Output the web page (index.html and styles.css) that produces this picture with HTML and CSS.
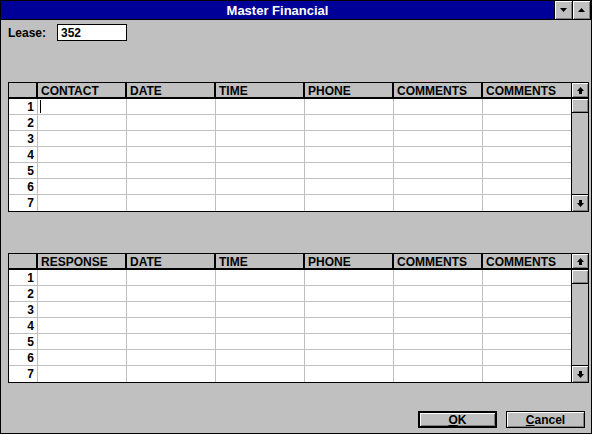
FILE: index.html
```html
<!DOCTYPE html>
<html lang="en">
<head>
  <meta charset="UTF-8" />
  <title>Master Financial</title>
  <link rel="stylesheet" href="styles.css">
</head>
<body>
  <div class="window">
    <div class="titlebar">
      <div class="title">Master Financial</div>
      <div class="tbtn"><svg width="7" height="4" viewBox="0 0 7 4"><path d="M0 0h7L3.5 4z" fill="#000"/></svg></div>
      <div class="tbtn last"><svg width="7" height="4" viewBox="0 0 7 4"><path d="M0 4h7L3.5 0z" fill="#000"/></svg></div>
    </div>

    <div class="lease">
      <label>Lease:</label>
      <div class="field">352</div>
    </div>

    <div class="grid first">
      <div class="sheet">
        <div class="row head">
          <div class="rh"></div>
          <div class="c">CONTACT</div>
          <div class="c">DATE</div>
          <div class="c">TIME</div>
          <div class="c">PHONE</div>
          <div class="c">COMMENTS</div>
          <div class="c">COMMENTS</div>
        </div>
        <div class="row"><div class="rh">1</div><div class="c"><span class="caret"></span></div><div class="c"></div><div class="c"></div><div class="c"></div><div class="c"></div><div class="c"></div></div>
        <div class="row"><div class="rh">2</div><div class="c"></div><div class="c"></div><div class="c"></div><div class="c"></div><div class="c"></div><div class="c"></div></div>
        <div class="row"><div class="rh">3</div><div class="c"></div><div class="c"></div><div class="c"></div><div class="c"></div><div class="c"></div><div class="c"></div></div>
        <div class="row"><div class="rh">4</div><div class="c"></div><div class="c"></div><div class="c"></div><div class="c"></div><div class="c"></div><div class="c"></div></div>
        <div class="row"><div class="rh">5</div><div class="c"></div><div class="c"></div><div class="c"></div><div class="c"></div><div class="c"></div><div class="c"></div></div>
        <div class="row"><div class="rh">6</div><div class="c"></div><div class="c"></div><div class="c"></div><div class="c"></div><div class="c"></div><div class="c"></div></div>
        <div class="row"><div class="rh">7</div><div class="c"></div><div class="c"></div><div class="c"></div><div class="c"></div><div class="c"></div><div class="c"></div></div>
      </div>
      <div class="vscroll">
        <div class="sbtn up"><svg width="7" height="7" viewBox="0 0 7 7"><path d="M3.5 0L7 4H5v3H2V4H0z" fill="#000"/></svg></div>
        <div class="thumb"></div>
        <div class="track"></div>
        <div class="sbtn down"><svg width="7" height="7" viewBox="0 0 7 7"><path d="M2 0h3v3h2L3.5 7 0 3h2z" fill="#000"/></svg></div>
      </div>
    </div>

    <div class="grid second">
      <div class="sheet">
        <div class="row head">
          <div class="rh"></div>
          <div class="c">RESPONSE</div>
          <div class="c">DATE</div>
          <div class="c">TIME</div>
          <div class="c">PHONE</div>
          <div class="c">COMMENTS</div>
          <div class="c">COMMENTS</div>
        </div>
        <div class="row"><div class="rh">1</div><div class="c"></div><div class="c"></div><div class="c"></div><div class="c"></div><div class="c"></div><div class="c"></div></div>
        <div class="row"><div class="rh">2</div><div class="c"></div><div class="c"></div><div class="c"></div><div class="c"></div><div class="c"></div><div class="c"></div></div>
        <div class="row"><div class="rh">3</div><div class="c"></div><div class="c"></div><div class="c"></div><div class="c"></div><div class="c"></div><div class="c"></div></div>
        <div class="row"><div class="rh">4</div><div class="c"></div><div class="c"></div><div class="c"></div><div class="c"></div><div class="c"></div><div class="c"></div></div>
        <div class="row"><div class="rh">5</div><div class="c"></div><div class="c"></div><div class="c"></div><div class="c"></div><div class="c"></div><div class="c"></div></div>
        <div class="row"><div class="rh">6</div><div class="c"></div><div class="c"></div><div class="c"></div><div class="c"></div><div class="c"></div><div class="c"></div></div>
        <div class="row"><div class="rh">7</div><div class="c"></div><div class="c"></div><div class="c"></div><div class="c"></div><div class="c"></div><div class="c"></div></div>
      </div>
      <div class="vscroll">
        <div class="sbtn up"><svg width="7" height="7" viewBox="0 0 7 7"><path d="M3.5 0L7 4H5v3H2V4H0z" fill="#000"/></svg></div>
        <div class="thumb"></div>
        <div class="track"></div>
        <div class="sbtn down"><svg width="7" height="7" viewBox="0 0 7 7"><path d="M2 0h3v3h2L3.5 7 0 3h2z" fill="#000"/></svg></div>
      </div>
    </div>

    <div class="actions">
      <button class="btn default"><u>O</u>K</button>
      <button class="btn"><u>C</u>ancel</button>
    </div>
  </div>
</body>
</html>
```

FILE: styles.css
```css
* { margin: 0; padding: 0; box-sizing: border-box; }
body { background: #c0c0c0; font-family: 'Liberation Sans', Arial, sans-serif; font-size: 12px; font-weight: bold; color: #000; }

.window {
  width: 592px; height: 434px; border: 1px solid #000; background: #c0c0c0;
  display: flex; flex-direction: column;
}

/* title bar */
.titlebar { display: flex; height: 19px; background: #000098; border-bottom: 1px solid #000; }
.title { flex: 1; color: #fff; text-align: center; font-size: 13px; line-height: 19px; }
.tbtn {
  width: 18px; display: flex; align-items: center; justify-content: center;
  background: #c0c0c0; border-left: 1px solid #000;
  box-shadow: inset 1px 1px #fff, inset -1px -1px #808080;
}
.tbtn.last { width: 19px; border-right: 1px solid #000; }

/* lease field */
.lease { display: flex; align-items: center; margin: 4px 0 0 7px; height: 17px; }
.lease label { width: 49px; }
.field { width: 70px; height: 17px; background: #fff; border: 1px solid #000; padding-left: 3px; line-height: 16px; }

/* spreadsheet grids */
.grid { display: flex; margin: 41px 2px 0 7px; border: 1px solid #000; background: #fff; }
.sheet { width: 562px; }
.row { display: flex; height: 16px; border-bottom: 1px solid #c0c0c0; }
.row:last-child { border-bottom: none; }
.row .rh { width: 29px; border-right: 1px solid #c0c0c0; text-align: right; padding-right: 3px; line-height: 17px; }
.row .c { width: 89px; border-right: 1px solid #c0c0c0; padding-left: 2px; display: flex; align-items: center; }
.row .c:last-child { width: 88px; border-right: none; }

.row.head { height: 16px; background: #c0c0c0; border-bottom: 2px solid #000; }
.row.head .rh, .row.head .c { border-right-color: #000; box-shadow: inset -1px 0 #000; line-height: 15px; padding-top: 1px; }
.row.head .c { padding-left: 3px; display: block; }
.row.head .c:last-child { box-shadow: none; }

.caret { display: inline-block; width: 1px; height: 13px; background: #000; }

/* vertical scrollbar */
.vscroll { width: 17px; border-left: 1px solid #000; background: #c0c0c0; display: flex; flex-direction: column; }
.sbtn {
  display: flex; align-items: center; justify-content: center;
  box-shadow: inset 1px 1px #fff, inset -1px -1px #808080;
}
.sbtn.up { height: 16px; border-bottom: 2px solid #000; }
.sbtn.down { height: 17px; border-top: 1px solid #000; }
.thumb { height: 14px; border-bottom: 1px solid #000; box-shadow: inset 1px 1px #fff, inset -1px -1px #808080; }
.track { flex: 1; }

/* dialog buttons */
.actions { margin-top: auto; display: flex; justify-content: flex-end; gap: 9px; padding: 0 6px 5px 0; }
.btn {
  width: 79px; height: 17px; background: #c0c0c0; border: 1px solid #000;
  font: bold 12px 'Liberation Sans', Arial, sans-serif;
  box-shadow: inset 1px 1px #fff, inset -1px -1px #808080;
}
.btn.default { border-width: 2px; }
```
